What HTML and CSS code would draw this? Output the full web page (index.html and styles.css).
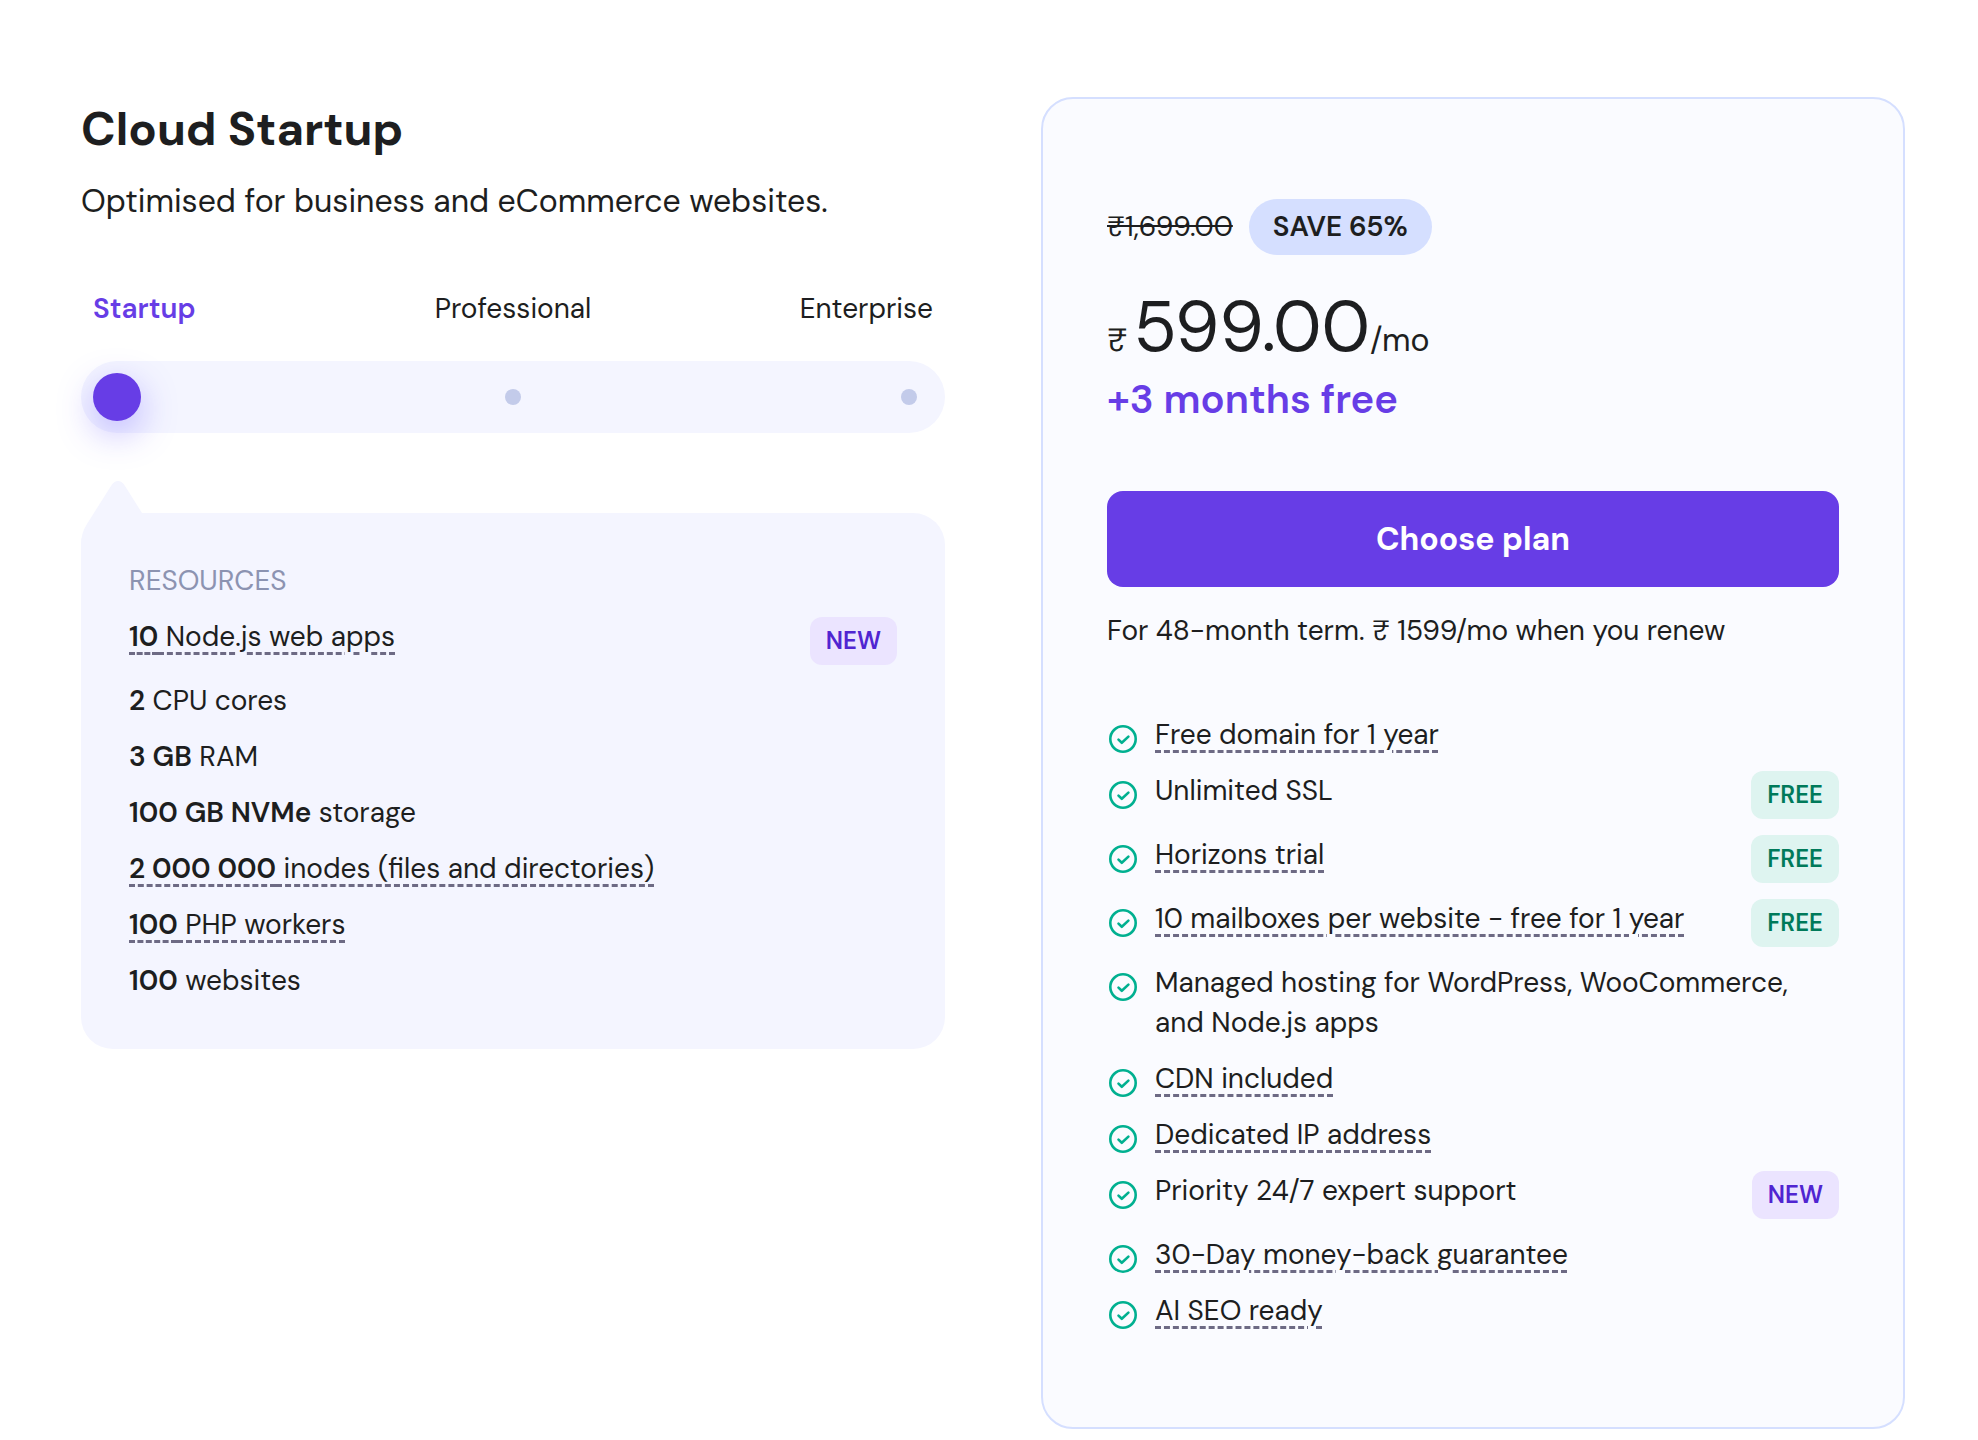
FILE: index.html
```html
<!DOCTYPE html>
<html lang="en">
<head>
<meta charset="utf-8">
<meta name="viewport" content="width=device-width, initial-scale=1">
<title>Cloud Startup</title>
<link rel="stylesheet" href="styles.css">
</head>
<body>
<svg class="sprite" aria-hidden="true">
  <symbol id="check" viewBox="0 0 32 32">
    <circle cx="16" cy="16" r="12.7" fill="none" stroke="currentColor" stroke-width="2.6"/>
    <path d="M11.5 16.6l3.3 3.2 6.6-6.2" fill="none" stroke="currentColor" stroke-width="2.6" stroke-linecap="round" stroke-linejoin="round"/>
  </symbol>
</svg>
<main class="page">
  <section class="plan">
    <h1 class="plan-title">Cloud Startup</h1>
    <p class="plan-lead">Optimised for business and eCommerce websites.</p>
    <label class="tiers" for="tier">
      <span class="tier tier-active">Startup</span>
      <span class="tier">Professional</span>
      <span class="tier">Enterprise</span>
    </label>
    <div class="slider">
      <div class="dots"><span class="dot"></span><span class="dot"></span><span class="dot"></span></div>
      <input class="range" id="tier" type="range" min="0" max="2" step="1" value="0">
    </div>
    <div class="resources">
      <svg class="pointer" viewBox="0 0 64 64" aria-hidden="true"><path d="M0 64Q0 52 6 43L30 5Q33 0 37 0Q41 0 44 5L61 32V64Z" fill="currentColor"/></svg>
      <h2 class="resources-title">RESOURCES</h2>
      <ul class="list">
        <li class="row"><span class="text"><span class="hint"><strong>10</strong> Node.js web apps</span></span><span class="badge badge-new">NEW</span></li>
        <li class="row"><span class="text"><strong>2</strong> CPU cores</span></li>
        <li class="row"><span class="text"><strong>3 GB</strong> RAM</span></li>
        <li class="row"><span class="text"><strong>100 GB NVMe</strong> storage</span></li>
        <li class="row"><span class="text"><span class="hint"><strong>2 000 000</strong> inodes (files and directories)</span></span></li>
        <li class="row"><span class="text"><span class="hint"><strong>100</strong> PHP workers</span></span></li>
        <li class="row"><span class="text"><strong>100</strong> websites</span></li>
      </ul>
    </div>
  </section>
  <section class="card">
    <div class="discount"><s>₹1,699.00</s><span class="save">SAVE 65%</span></div>
    <p class="price"><span class="unit">₹</span><span class="amount">599.00</span><span class="unit">/mo</span></p>
    <p class="bonus">+3 months free</p>
    <button class="choose" type="button">Choose plan</button>
    <p class="term">For 48-month term. ₹ 1599/mo when you renew</p>
    <ul class="list">
      <li class="row"><svg class="check"><use href="#check"/></svg><span class="text"><span class="hint">Free domain for 1 year</span></span></li>
      <li class="row"><svg class="check"><use href="#check"/></svg><span class="text">Unlimited SSL</span><span class="badge badge-free">FREE</span></li>
      <li class="row"><svg class="check"><use href="#check"/></svg><span class="text"><span class="hint">Horizons trial</span></span><span class="badge badge-free">FREE</span></li>
      <li class="row"><svg class="check"><use href="#check"/></svg><span class="text"><span class="hint">10 mailboxes per website - free for 1 year</span></span><span class="badge badge-free">FREE</span></li>
      <li class="row"><svg class="check"><use href="#check"/></svg><span class="text">Managed hosting for WordPress, WooCommerce, and Node.js apps</span></li>
      <li class="row"><svg class="check"><use href="#check"/></svg><span class="text"><span class="hint">CDN included</span></span></li>
      <li class="row"><svg class="check"><use href="#check"/></svg><span class="text"><span class="hint">Dedicated IP address</span></span></li>
      <li class="row"><svg class="check"><use href="#check"/></svg><span class="text">Priority 24/7 expert support</span><span class="badge badge-new">NEW</span></li>
      <li class="row"><svg class="check"><use href="#check"/></svg><span class="text"><span class="hint">30-Day money-back guarantee</span></span></li>
      <li class="row"><svg class="check"><use href="#check"/></svg><span class="text"><span class="hint">AI SEO ready</span></span></li>
    </ul>
  </section>
</main>
</body>
</html>
```
FILE: styles.css
```css
* { box-sizing: border-box; }
body {
  margin: 0;
  background: #fff;
  color: #1d1e20;
  font: 400 28px/40px "DM Sans", Inter, "Liberation Sans", sans-serif;
}
h1, h2, p, ul { margin: 0; padding: 0; }
strong { font-weight: 600; }
.sprite { display: none; }

.page {
  display: grid;
  grid-template-columns: 1fr 1fr;
  gap: 96px;
  align-items: start;
  padding: 97px 73px 0 81px;
}

.plan-title { font-size: 47px; line-height: 64px; font-weight: 700; }
.plan-lead { margin-top: 16px; font-size: 32px; line-height: 48px; }

.tiers { display: grid; grid-template-columns: 1fr 1fr 1fr; margin-top: 64px; padding: 0 12px; }
.tier { text-align: center; }
.tier:first-child { text-align: left; }
.tier:last-child { text-align: right; }
.tier-active { color: #673de6; font-weight: 600; }

.slider { position: relative; height: 72px; margin-top: 32px; border-radius: 36px; background: #f4f5ff; }
.dots { display: flex; align-items: center; justify-content: space-between; height: 72px; padding: 0 28px; }
.dot { width: 16px; height: 16px; border-radius: 50%; background: #c3cbea; }
.range {
  position: absolute;
  inset: 0;
  width: 100%;
  height: 72px;
  margin: 0;
  padding: 0 12px;
  appearance: none;
  background: transparent;
}
.range::-webkit-slider-thumb {
  appearance: none;
  width: 48px;
  height: 48px;
  border-radius: 50%;
  background: #673de6;
  box-shadow: 0 12px 36px rgba(80, 60, 255, 0.36);
}

.resources { position: relative; margin-top: 80px; padding: 48px; border-radius: 32px; background: #f4f5ff; }
.pointer { position: absolute; left: 0; top: -32px; width: 64px; height: 64px; color: #f4f5ff; }
.resources-title { margin-bottom: 16px; color: #8c93b1; font-size: 28px; line-height: 40px; font-weight: 400; }

.list { display: flex; flex-direction: column; gap: 16px; list-style: none; }
.row { display: flex; align-items: flex-start; }
.text { flex: 1; }
.hint {
  text-decoration: underline dashed #6d6a84 3px;
  text-underline-offset: 6px;
}
.check { flex: none; width: 32px; height: 32px; margin: 8px 16px 0 0; color: #00b090; }
.badge { padding: 8px 16px; border-radius: 12px; font-size: 24px; line-height: 32px; font-weight: 600; }
.badge-new { background: #ebe4ff; color: #5025d1; }
.badge-free { background: #def4f0; color: #007a5a; }

.card { padding: 100px 64px 96px; border: 2px solid #d5dfff; border-radius: 32px; background: #fafbff; }
.discount { display: flex; align-items: center; gap: 16px; }
.save { padding: 8px 24px; border-radius: 28px; background: #d5dfff; font-weight: 600; }
.price { display: flex; align-items: baseline; margin-top: 28px; }
.unit { font-size: 32px; line-height: 40px; }
.amount { margin-left: 6px; font-size: 71px; line-height: 88px; }
.bonus { color: #673de6; font-size: 40px; line-height: 56px; font-weight: 600; }
.choose {
  display: block;
  width: 100%;
  height: 96px;
  margin-top: 64px;
  border: 0;
  border-radius: 16px;
  background: #673de6;
  color: #fff;
  font: inherit;
  font-size: 32px;
  font-weight: 700;
}
.term { margin: 24px 0 64px; }
```
